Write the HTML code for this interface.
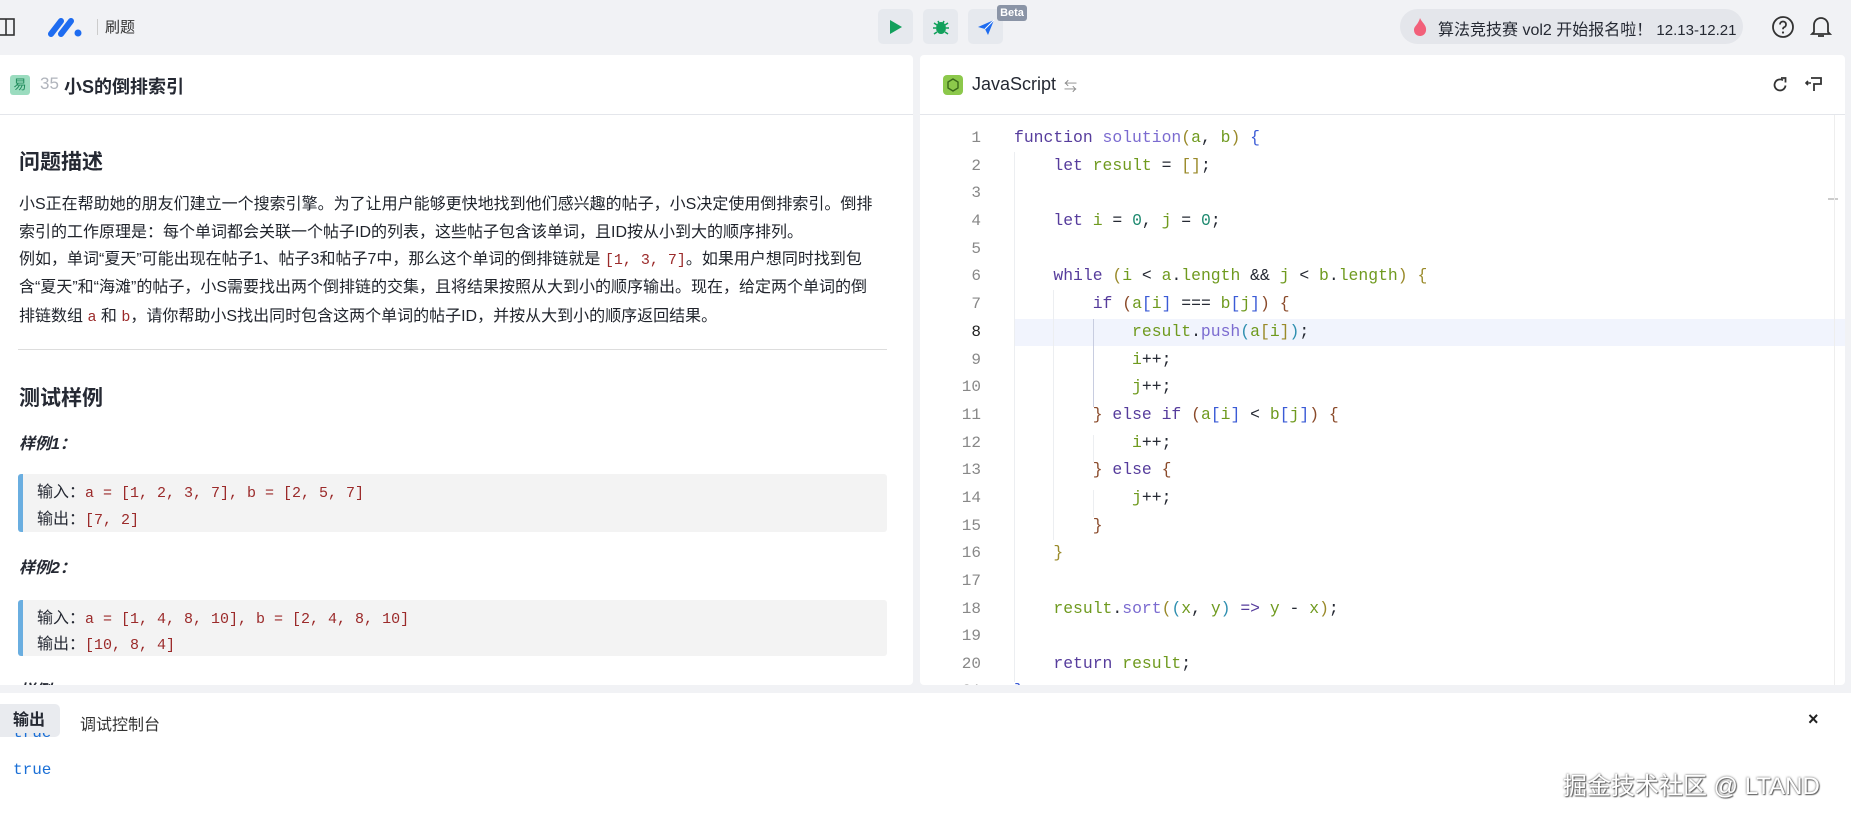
<!DOCTYPE html>
<html><head><meta charset="utf-8"><style>
*{margin:0;padding:0;box-sizing:border-box}
body{width:1851px;height:817px;overflow:hidden;background:#f1f2f5;font-family:"Liberation Sans","Noto Sans CJK SC",sans-serif;color:#252933;position:relative}
.abs{position:absolute}
.btn{position:absolute;top:9px;width:35px;height:35px;border-radius:5px;background:#e6e9ee;display:flex;align-items:center;justify-content:center}
.panel{position:absolute;background:#fff;border-radius:4px}
.mono{font-family:"Liberation Mono","DejaVu Sans Mono",monospace}
.p{position:absolute;left:19px;font-size:16px;white-space:nowrap;line-height:20px;color:#1f232b}
.code{position:absolute;left:1014px;font-size:16.4px;white-space:pre;line-height:20px}
.ln{position:absolute;left:940px;width:41px;text-align:right;font-size:16px;color:#888;line-height:20px}
.k{color:#563c9c}.f{color:#7b6bd0}.v{color:#6f9a1f}.n{color:#1f8a70}.o{color:#333}.b1{color:#3b5bd6}.b2{color:#9a8a2a}.b3{color:#2f8fb0}.br{color:#8a4a2a}
.ex{position:absolute;left:18px;width:869px;background:#f3f3f3;border-left:5px solid #6aaee0;border-radius:3px}
.ex div{position:absolute;left:14px;font-size:16px;white-space:nowrap}
.red{color:#9b2a2a}
</style></head><body>
<!-- top bar -->
<svg class="abs" style="left:0;top:17px" width="16" height="20" viewBox="0 0 16 20"><rect x="-4" y="2" width="18" height="16" fill="none" stroke="#333" stroke-width="1.6"/><line x1="6" y1="2" x2="6" y2="18" stroke="#333" stroke-width="1.6"/></svg>
<svg class="abs" style="left:48px;top:16px" width="36" height="22" viewBox="0 0 36 22"><path d="M3 18 L13 5 M13 18 L23 5" stroke="#1e6cf0" stroke-width="6" stroke-linecap="round"/><circle cx="30" cy="17" r="3.5" fill="#1e6cf0"/></svg>
<div class="abs" style="left:97px;top:19px;width:1px;height:16px;background:#ccc"></div>
<div class="abs" style="left:105px;top:16px;font-size:15px;color:#333">刷题</div>
<div class="btn" style="left:878px"><svg width="14" height="16"><path d="M1 1 L13 8 L1 15Z" fill="#12a05c"/></svg></div>
<div class="btn" style="left:923px"><svg width="18" height="18" viewBox="0 0 18 18"><ellipse cx="9" cy="10" rx="5" ry="6" fill="#12a05c"/><path d="M2 5l3 2M16 5l-3 2M1 10h3M17 10h-3M2 16l3-2M16 16l-3-2M6 3l1 2M12 3l-1 2" stroke="#12a05c" stroke-width="1.6"/></svg></div>
<div class="btn" style="left:968px"><svg width="18" height="18" viewBox="0 0 18 18"><path d="M1 9 L17 2 L11 17 L8 11Z" fill="#1e6cf0"/><path d="M8 11 L17 2" stroke="#fff" stroke-width="1"/></svg></div>
<div class="abs" style="left:997px;top:5px;width:30px;height:16px;background:#8a94a6;border-radius:3px;color:#fff;font-size:11px;font-weight:bold;text-align:center;line-height:16px">Beta</div>
<div class="abs" style="left:1400px;top:9px;width:343px;height:35px;border-radius:18px;background:#e4e6eb"></div>
<svg class="abs" style="left:1412px;top:17px" width="16" height="20" viewBox="0 0 16 20"><path d="M8 1 C10 6 15 8 14 14 C13 18 10 19 8 19 C5 19 2 17 2 13 C2 9 6 8 8 1Z" fill="#f2607a"/></svg>
<div class="abs" style="left:1438px;top:16px;font-size:16px;color:#252933;white-space:nowrap">算法竞技赛 vol2 开始报名啦！<span style="font-size:15px"> 12.13-12.21</span></div>
<svg class="abs" style="left:1771px;top:15px" width="24" height="24" viewBox="0 0 24 24"><circle cx="12" cy="12" r="10" fill="none" stroke="#333" stroke-width="1.8"/><path d="M9 9.5a3 3 0 1 1 4 2.8c-.8.4-1 1-1 2" fill="none" stroke="#333" stroke-width="1.8"/><circle cx="12" cy="17.5" r="1.1" fill="#333"/></svg>
<svg class="abs" style="left:1810px;top:15px" width="22" height="24" viewBox="0 0 22 24"><path d="M4 17V10a7 7 0 0 1 14 0v7l2 2H2z" fill="none" stroke="#333" stroke-width="1.8"/><path d="M8 21h6" stroke="#333" stroke-width="1.8"/></svg>

<!-- left panel -->
<div class="panel" style="left:0;top:55px;width:913px;height:630px;border-radius:0 4px 4px 0"></div>
<div class="abs" style="left:0;top:114px;width:913px;height:1px;background:#e4e6eb"></div>
<div class="abs" style="left:10px;top:75px;width:20px;height:20px;background:#9bdcbf;border-radius:3px;color:#1d8a5a;font-size:13px;text-align:center;line-height:20px">易</div>
<div class="abs" style="left:40px;top:74px;font-size:17px;color:#b0b4bc">35</div>
<div class="abs" style="left:64px;top:73px;font-size:18px;font-weight:bold;color:#252933">小S的倒排索引</div>
<div class="abs" style="left:19px;top:146px;font-size:21px;font-weight:bold">问题描述</div>
<div class="p" style="top:195px">小S正在帮助她的朋友们建立一个搜索引擎。为了让用户能够更快地找到他们感兴趣的帖子，小S决定使用倒排索引。倒排</div>
<div class="p" style="top:223px">索引的工作原理是：每个单词都会关联一个帖子ID的列表，这些帖子包含该单词，且ID按从小到大的顺序排列。</div>
<div class="p" style="top:250px">例如，单词“夏天”可能出现在帖子1、帖子3和帖子7中，那么这个单词的倒排链就是 <span class="mono red" style="font-size:15px">[1, 3, 7]</span>。如果用户想同时找到包</div>
<div class="p" style="top:278px">含“夏天”和“海滩”的帖子，小S需要找出两个倒排链的交集，且将结果按照从大到小的顺序输出。现在，给定两个单词的倒</div>
<div class="p" style="top:307px">排链数组 <span class="mono red" style="font-size:15px">a</span> 和 <span class="mono red" style="font-size:15px">b</span>，请你帮助小S找出同时包含这两个单词的帖子ID，并按从大到小的顺序返回结果。</div>
<div class="abs" style="left:18px;top:349px;width:869px;height:1px;background:#ddd"></div>
<div class="abs" style="left:19px;top:382px;font-size:21px;font-weight:bold">测试样例</div>
<div class="abs" style="left:19px;top:430px;font-size:16px;font-weight:bold;font-style:italic">样例1：</div>
<div class="ex" style="top:474px;height:58px"><div style="top:4px">输入：<span class="mono red" style="font-size:15px">a = [1, 2, 3, 7], b = [2, 5, 7]</span></div><div style="top:31px">输出：<span class="mono red" style="font-size:15px">[7, 2]</span></div></div>
<div class="abs" style="left:19px;top:554px;font-size:16px;font-weight:bold;font-style:italic">样例2：</div>
<div class="ex" style="top:600px;height:56px"><div style="top:4px">输入：<span class="mono red" style="font-size:15px">a = [1, 4, 8, 10], b = [2, 4, 8, 10]</span></div><div style="top:30px">输出：<span class="mono red" style="font-size:15px">[10, 8, 4]</span></div></div>
<div class="abs" style="left:19px;top:677px;font-size:16px;font-weight:bold;font-style:italic">样例3：</div>

<!-- right panel -->
<div class="panel" style="left:920px;top:55px;width:925px;height:630px"></div>
<div class="abs" style="left:920px;top:114px;width:925px;height:1px;background:#e4e6eb"></div>
<div class="abs" style="left:943px;top:75px;width:20px;height:20px;background:#8cc84b;border-radius:4px"><svg width="20" height="20" viewBox="0 0 20 20"><path d="M10 4l5 3v6l-5 3-5-3V7z" fill="none" stroke="#3b6a1a" stroke-width="1.4"/></svg></div>
<div class="abs" style="left:972px;top:74px;font-size:18px;color:#252933">JavaScript</div>
<div class="abs" style="left:1064px;top:76px;font-size:13px;color:#888">⇆</div>
<svg class="abs" style="left:1771px;top:76px" width="18" height="18" viewBox="0 0 18 18"><path d="M14.5 9.5A5.5 5.5 0 1 1 12 4.3" fill="none" stroke="#333" stroke-width="1.8"/><path d="M10 2h4.5v4.5" fill="none" stroke="#333" stroke-width="1.8"/></svg>
<svg class="abs" style="left:1805px;top:75px" width="20" height="20" viewBox="0 0 20 20"><path d="M6 3h10v6H9v7" fill="none" stroke="#333" stroke-width="1.8"/><path d="M1 8h5M3 6l-2 2 2 2" fill="none" stroke="#333" stroke-width="1.6"/></svg>
<div class="abs" style="left:1014px;top:319px;width:831px;height:27px;background:#f1f4fd"></div>
<div class="abs" style="left:1014px;top:152px;width:1px;height:530px;background:#eceef1"></div>
<div class="abs" style="left:1053px;top:290px;width:1px;height:250px;background:#eceef1"></div>
<div class="abs" style="left:1093px;top:319px;width:1px;height:88px;background:#c8cde0"></div>
<div class="abs" style="left:1093px;top:435px;width:1px;height:27px;background:#eceef1"></div>
<div class="abs" style="left:1093px;top:490px;width:1px;height:27px;background:#eceef1"></div>
<div class="abs" style="left:1828px;top:198px;width:10px;height:2px;background:#ccc"></div>
<div class="abs" style="left:1834px;top:115px;width:1px;height:570px;background:#eee"></div>

<div class="ln mono" style="top:128px">1</div><div class="code mono" style="top:128px"><span class="k">function</span> <span class="f">solution</span><span class="b2">(</span><span class="v">a</span>, <span class="v">b</span><span class="b2">)</span> <span class="b1">{</span></div>
<div class="ln mono" style="top:156px">2</div><div class="code mono" style="top:156px">    <span class="k">let</span> <span class="v">result</span> = <span class="b2">[]</span>;</div>
<div class="ln mono" style="top:183px">3</div>
<div class="ln mono" style="top:211px">4</div><div class="code mono" style="top:211px">    <span class="k">let</span> <span class="v">i</span> = <span class="n">0</span>, <span class="v">j</span> = <span class="n">0</span>;</div>
<div class="ln mono" style="top:239px">5</div>
<div class="ln mono" style="top:266px">6</div><div class="code mono" style="top:266px">    <span class="k">while</span> <span class="b2">(</span><span class="v">i</span> &lt; <span class="v">a</span>.<span class="v">length</span> &amp;&amp; <span class="v">j</span> &lt; <span class="v">b</span>.<span class="v">length</span><span class="b2">)</span> <span class="b2">{</span></div>
<div class="ln mono" style="top:294px">7</div><div class="code mono" style="top:294px">        <span class="k">if</span> <span class="br">(</span><span class="v">a</span><span class="b1">[</span><span class="v">i</span><span class="b1">]</span> === <span class="v">b</span><span class="b1">[</span><span class="v">j</span><span class="b1">]</span><span class="br">)</span> <span class="br">{</span></div>
<div class="ln mono" style="top:322px;color:#222">8</div><div class="code mono" style="top:322px">            <span class="v">result</span>.<span class="f">push</span><span class="b3">(</span><span class="v">a</span><span class="b2">[</span><span class="v">i</span><span class="b2">]</span><span class="b3">)</span>;</div>
<div class="ln mono" style="top:350px">9</div><div class="code mono" style="top:350px">            <span class="v">i</span>++;</div>
<div class="ln mono" style="top:377px">10</div><div class="code mono" style="top:377px">            <span class="v">j</span>++;</div>
<div class="ln mono" style="top:405px">11</div><div class="code mono" style="top:405px">        <span class="br">}</span> <span class="k">else if</span> <span class="br">(</span><span class="v">a</span><span class="b1">[</span><span class="v">i</span><span class="b1">]</span> &lt; <span class="v">b</span><span class="b1">[</span><span class="v">j</span><span class="b1">]</span><span class="br">)</span> <span class="br">{</span></div>
<div class="ln mono" style="top:433px">12</div><div class="code mono" style="top:433px">            <span class="v">i</span>++;</div>
<div class="ln mono" style="top:460px">13</div><div class="code mono" style="top:460px">        <span class="br">}</span> <span class="k">else</span> <span class="br">{</span></div>
<div class="ln mono" style="top:488px">14</div><div class="code mono" style="top:488px">            <span class="v">j</span>++;</div>
<div class="ln mono" style="top:516px">15</div><div class="code mono" style="top:516px">        <span class="br">}</span></div>
<div class="ln mono" style="top:543px">16</div><div class="code mono" style="top:543px">    <span class="b2">}</span></div>
<div class="ln mono" style="top:571px">17</div>
<div class="ln mono" style="top:599px">18</div><div class="code mono" style="top:599px">    <span class="v">result</span>.<span class="f">sort</span><span class="b2">(</span><span class="b3">(</span><span class="v">x</span>, <span class="v">y</span><span class="b3">)</span> <span class="k">=&gt;</span> <span class="v">y</span> - <span class="v">x</span><span class="b2">)</span>;</div>
<div class="ln mono" style="top:626px">19</div>
<div class="ln mono" style="top:654px">20</div><div class="code mono" style="top:654px">    <span class="k">return</span> <span class="v">result</span>;</div>
<div class="ln mono" style="top:681px">21</div><div class="code mono b1" style="top:681px">}</div>
<div class="abs" style="left:0;top:685px;width:1851px;height:8px;background:#f1f2f5"></div>

<!-- bottom panel -->
<div class="abs" style="left:0;top:693px;width:1851px;height:124px;background:#fff"></div>
<div class="abs" style="left:0;top:704px;width:60px;height:33px;background:#e9ebef;border-radius:0 5px 5px 0;font-size:16px;font-weight:bold;line-height:33px;padding-left:13px">输出</div>
<div class="abs" style="left:80px;top:711px;font-size:16px;color:#333">调试控制台</div>
<div class="abs" style="left:1808px;top:709px;font-size:18px;font-weight:bold;color:#222">×</div>
<div class="abs mono" style="left:13px;top:733px;font-size:16px;color:#1a6fd6;height:8px;overflow:hidden;line-height:0">true</div>
<div class="abs mono" style="left:13px;top:761px;font-size:16px;color:#1a6fd6">true</div>
<div class="abs" style="left:1563px;top:766px;font-size:24px;color:#fff;white-space:nowrap;text-shadow:0 0 2px #555,1px 1px 1px #666">掘金技术社区 @ LTAND</div>
</body></html>
